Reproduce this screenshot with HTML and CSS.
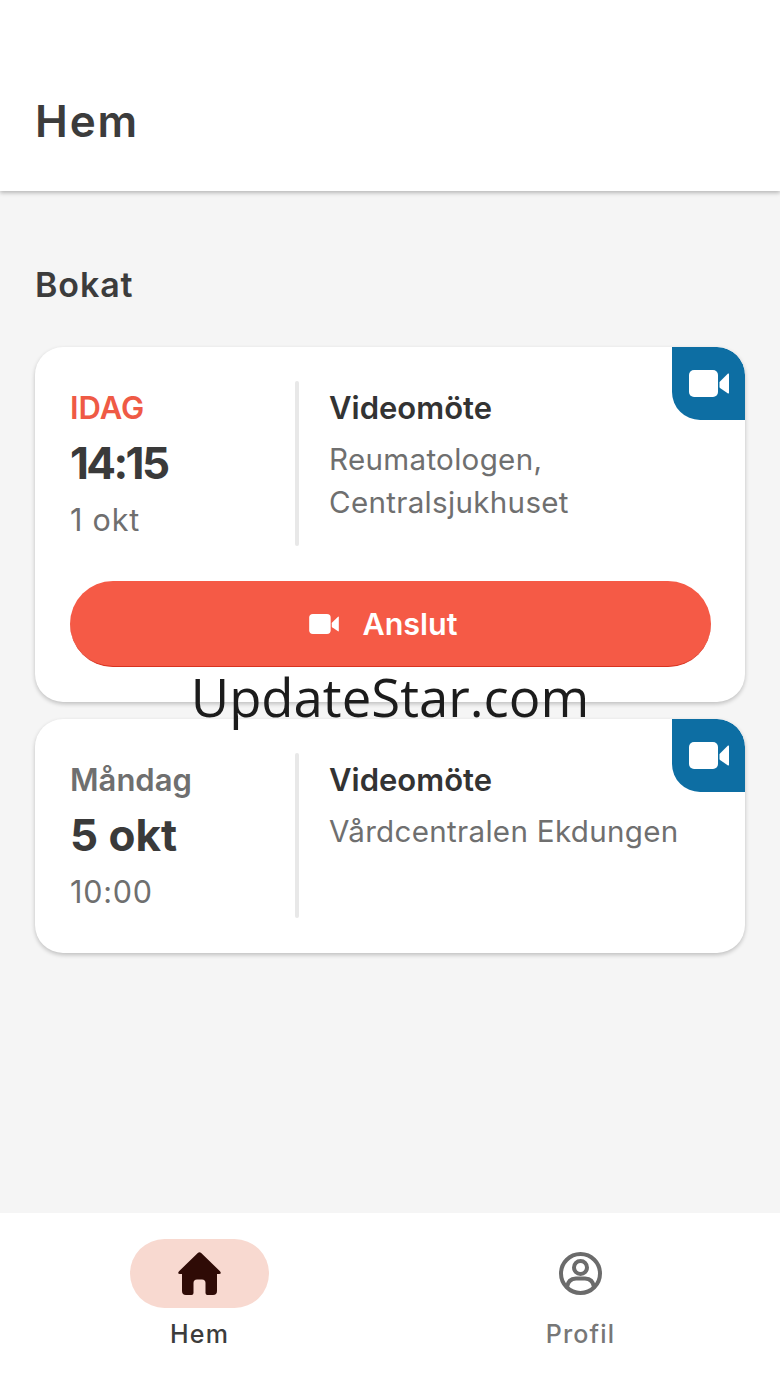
FILE: index.html
```html
<!DOCTYPE html>
<html lang="sv">
<head>
<meta charset="utf-8">
<title>Hem</title>
<link rel="stylesheet" href="styles.css">
</head>
<body>
<div class="app">
  <header class="topbar"><h1 class="title">Hem</h1></header>
  <main class="content">
    <h2 class="section">Bokat</h2>
    <article class="card">
      <div class="badge"><svg class="cam" viewBox="0 0 40 27"><rect width="29" height="27" rx="5"/><path d="M31 11.5 39 3.6Q40 3 40 4.5V22.5Q40 24 39 23.4L31 18Q30.500 17.500 30.500 16.500V12.500Q30.500 12 31 11.5Z"/></svg></div>
      <div class="row">
        <div class="when">
          <div class="day today">IDAG</div>
          <div class="big tight">14:15</div>
          <div class="small">1 okt</div>
        </div>
        <div class="what">
          <div class="kind">Videomöte</div>
          <div class="place">Reumatologen, Centralsjukhuset</div>
        </div>
      </div>
      <button class="join"><svg class="cam-small" viewBox="0 0 40 27"><rect width="29" height="27" rx="5"/><path d="M31 11.5 39 3.6Q40 3 40 4.5V22.5Q40 24 39 23.4L31 18Q30.500 17.500 30.500 16.500V12.500Q30.500 12 31 11.5Z"/></svg><span>Anslut</span></button>
    </article>
    <article class="card">
      <div class="badge"><svg class="cam" viewBox="0 0 40 27"><rect width="29" height="27" rx="5"/><path d="M31 11.5 39 3.6Q40 3 40 4.5V22.5Q40 24 39 23.4L31 18Q30.500 17.500 30.500 16.500V12.500Q30.500 12 31 11.5Z"/></svg></div>
      <div class="row">
        <div class="when">
          <div class="day">Måndag</div>
          <div class="big">5 okt</div>
          <div class="small">10:00</div>
        </div>
        <div class="what">
          <div class="kind">Videomöte</div>
          <div class="place">Vårdcentralen Ekdungen</div>
        </div>
      </div>
    </article>
  </main>
  <nav class="tabs">
    <div class="tab active">
      <div class="pill"><svg class="tabicon" viewBox="0 0 43 43"><path d="M19.800.9Q21.500-.500 23.200.9L42 19.300Q44 21.700 41 22H39V39Q39 43 35 43H29.500Q27.500 43 27.500 41V31Q27.500 27.500 24 27.500H19Q15.500 27.500 15.500 31V41Q15.500 43 13.500 43H8Q4 43 4 39V22H2Q-1 21.700 1 19.300Z"/></svg></div>
      <span class="label">Hem</span>
    </div>
    <div class="tab">
      <div class="pill"><svg class="tabicon" viewBox="0 0 43 43"><g class="line"><circle cx="21.500" cy="21.500" r="19.500"/><circle cx="21.500" cy="15.500" r="6.500"/><path d="M8 35Q9 27 17 26.500H26Q34 27 35 35"/></g></svg></div>
      <span class="label">Profil</span>
    </div>
  </nav>
  <div class="watermark">UpdateStar.com</div>
</div>
</body>
</html>
```
FILE: styles.css
```css
* { box-sizing: border-box; }
html, body { margin: 0; padding: 0; }
body { font-family: Inter, "Liberation Sans", sans-serif; color: #3a3a3a; }
.app { position: relative; width: 780px; height: 1386px; display: flex; flex-direction: column; background: #f5f5f5; overflow: hidden; }
.topbar { height: 191px; background: #fff; padding: 96px 36px 0; box-shadow: 0 2px 4px rgba(0,0,0,.25); position: relative; }
.title { margin: 0 0 0 -1px; font-size: 44px; line-height: 50px; font-weight: 600; letter-spacing: 1.900px; color: #3c3c3c; }
.content { flex: 1; padding: 74px 35px 0; display: flex; flex-direction: column; }
.section { margin: 0 0 43px; font-size: 34px; line-height: 39px; font-weight: 600; letter-spacing: .9px; color: #3c3c3c; }
.card { position: relative; background: #fff; border-radius: 28px; padding: 34px 35px 35px; box-shadow: 0 2px 4px rgba(0,0,0,.22); margin-bottom: 17px; overflow: hidden; }
.badge { position: absolute; top: 0; right: 0; width: 73px; height: 73px; background: #0d6ea3; border-radius: 0 28px 0 28px; padding: 23px 0 0 17px; }
.cam { display: block; width: 40px; height: 27px; fill: #fff; }
.row { display: flex; height: 165px; }
.when { width: 229px; flex: none; position: relative; }
.when::after { content: ""; position: absolute; top: 0; bottom: 0; right: 0; width: 4px; border-radius: 2px; background: #e8e8e8; }
.what { padding-left: 30px; flex: 1; }
.day { font-size: 31px; line-height: 54px; font-weight: 600; color: #6f6f6f; }
.today { color: #ef5a45; }
.big { margin-top: -2px; font-size: 44px; line-height: 60px; font-weight: 700; color: #3a3a3a; }
.tight { letter-spacing: -2.600px; }
.small { font-size: 30.500px; line-height: 54px; color: #6f6f6f; letter-spacing: .8px; }
.kind { font-size: 31px; line-height: 54px; font-weight: 600; color: #333; }
.place { font-size: 29.600px; line-height: 43px; color: #6f6f6f; padding-top: 3px; letter-spacing: .3px; width: 300px; }
.card:nth-of-type(2) .place { width: auto; }
.join { margin-top: 35px; width: 641px; height: 86px; border: 0; border-radius: 43px; background: #f55a46; color: #fff; display: flex; align-items: center; justify-content: center; gap: 23px; font: 600 30.500px Inter, "Liberation Sans", sans-serif; padding: 0 14px 0 0; border-bottom: 1px solid #d8321f; }
.cam-small { width: 30px; height: 20px; fill: #fff; }
.tabs { height: 173px; background: #fff; display: grid; grid-template-columns: 381px 381px; padding: 26px 9px 0; }
.tab { display: flex; flex-direction: column; align-items: center; }
.pill { width: 139px; height: 69px; border-radius: 35px; display: flex; align-items: center; justify-content: center; }
.active .pill { background: #f8d9d0; }
.tabicon { width: 43px; height: 43px; fill: #2f0b06; }
.line { fill: none; stroke: #6b6b6b; stroke-width: 4; }
.label { margin-top: 8px; font-size: 25px; line-height: 36px; font-weight: 500; letter-spacing: 1.200px; color: #777; }
.active .label { color: #3c3c3c; }
.watermark { position: absolute; left: 0; right: 0; top: 659px; text-align: center; font-family: "Open Sans", sans-serif; font-size: 52.700px; line-height: 76px; color: #1c1c1c; }
```
